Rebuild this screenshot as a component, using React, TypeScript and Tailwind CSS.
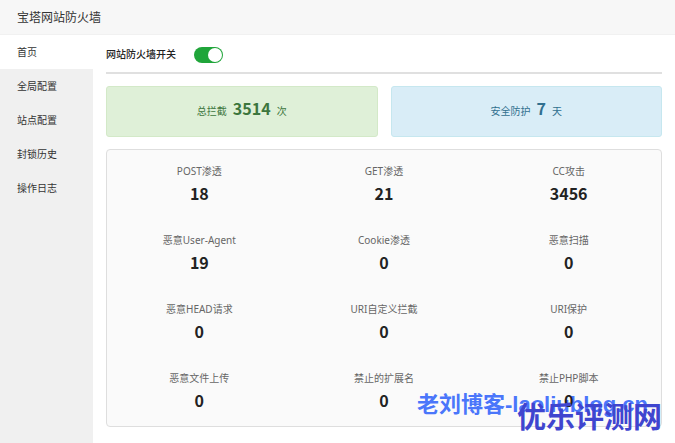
import { useState } from "react";

const menu = ["首页", "全局配置", "站点配置", "封锁历史", "操作日志"];

const stats = [
  { label: "POST渗透", value: 18 },
  { label: "GET渗透", value: 21 },
  { label: "CC攻击", value: 3456 },
  { label: "恶意User-Agent", value: 19 },
  { label: "Cookie渗透", value: 0 },
  { label: "恶意扫描", value: 0 },
  { label: "恶意HEAD请求", value: 0 },
  { label: "URI自定义拦截", value: 0 },
  { label: "URI保护", value: 0 },
  { label: "恶意文件上传", value: 0 },
  { label: "禁止的扩展名", value: 0 },
  { label: "禁止PHP脚本", value: 0 },
];

function Sidebar() {
  const [active, setActive] = useState("首页");
  return (
    <nav className="w-[93px] shrink-0 bg-[#f0f0f0]">
      {menu.map((item) => (
        <button
          key={item}
          type="button"
          onClick={() => setActive(item)}
          className={
            item === active
              ? "block h-[34px] w-full bg-white pl-[17px] text-left text-[10px] text-[#333333]"
              : "block h-[34px] w-full pl-[17px] text-left text-[10px] text-[#333333]"
          }
        >
          {item}
        </button>
      ))}
    </nav>
  );
}

function FirewallSwitch() {
  return (
    <div className="flex h-[39px] items-center gap-[18px] border-b-2 border-[#e0e0e0] pt-0.5">
      <label htmlFor="firewall" className="text-[10px] font-medium text-[#222222]">
        网站防火墙开关
      </label>
      <input
        id="firewall"
        type="checkbox"
        role="switch"
        defaultChecked
        className="h-4 w-[29px] appearance-none rounded-full bg-[#b5b5b5] p-px before:block before:size-[14px] before:rounded-full before:bg-white checked:bg-[#20a53a] checked:before:ml-[13px]"
      />
    </div>
  );
}

export default function App() {
  return (
    <div className="relative flex min-h-screen flex-col bg-white font-['Noto_Sans','Noto_Sans_CJK_SC',sans-serif] text-[#333333]">
      <header className="flex h-[35px] items-center border-b border-[#f1f1f1] bg-[#f7f7f7] px-[17px] pt-0.5">
        <h1 className="text-xs">宝塔网站防火墙</h1>
      </header>
      <div className="flex grow">
        <Sidebar />
        <main className="flex grow flex-col gap-3 px-[13px] pb-[15px]">
          <FirewallSwitch />
          <section className="grid grid-cols-2 gap-[13px]">
            <p className="flex h-[51px] items-baseline justify-center gap-1.5 rounded-[3px] border border-[#d3e9c8] bg-[#dff0d8] pt-[9px] text-[10px] text-[#3c763d]">
              总拦截
              <strong className="font-['Noto_Sans_CJK_SC',sans-serif] text-base font-bold">3514</strong>
              次
            </p>
            <p className="flex h-[51px] items-baseline justify-center gap-1.5 rounded-[3px] border border-[#c6e7ef] bg-[#d9edf7] pt-[9px] text-[10px] text-[#31708f]">
              安全防护
              <strong className="font-['Noto_Sans_CJK_SC',sans-serif] text-base font-bold">7</strong>
              天
            </p>
          </section>
          <dl className="grid grid-cols-3 gap-y-6 rounded border border-[#dedede] bg-[#fafafa] py-3">
            {stats.map((s) => (
              <div key={s.label} className="h-[45px] text-center">
                <dt className="text-[10px] leading-[18px] text-[#666666]">{s.label}</dt>
                <dd className="relative z-10 font-['Noto_Sans_CJK_SC',sans-serif] text-base leading-[26px] font-bold text-[#222222]">
                  {s.value}
                </dd>
              </div>
            ))}
          </dl>
        </main>
      </div>
      <div className="pointer-events-none absolute right-[27px] bottom-[22px] font-['Liberation_Sans','Noto_Sans_CJK_SC',sans-serif] text-[22px] leading-8 font-bold whitespace-nowrap text-[#4a76fa]">
        老刘博客-laoliublog.cn
      </div>
      <div className="pointer-events-none absolute right-[13px] bottom-2 z-20 font-['Noto_Sans_CJK_SC',sans-serif] text-[29px] leading-10 font-bold whitespace-nowrap text-[#3f45cf]">
        优乐评测网
      </div>
    </div>
  );
}
